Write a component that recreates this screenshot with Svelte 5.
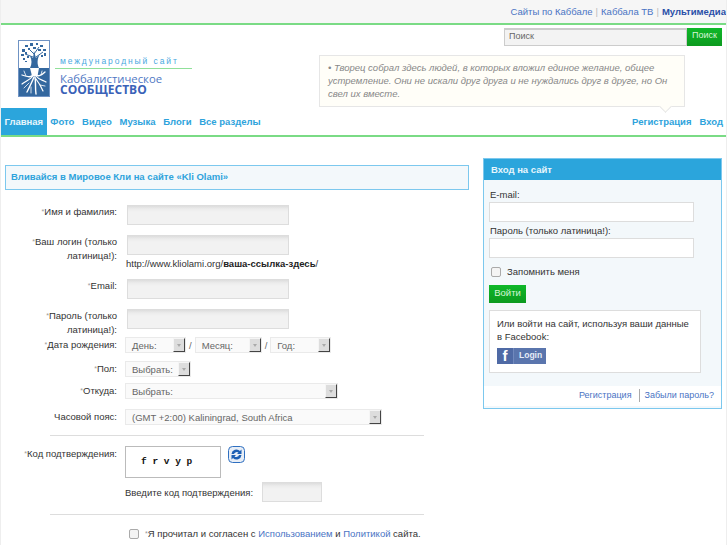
<script>
  const tz = '(GMT +2:00) Kaliningrad, South Africa'
</script>

{#snippet select(label, width)}
  <span class="select" style="width: {width}px">
    <span class="select-label">{label}</span>
    <span class="select-btn"><i></i></span>
  </span>
{/snippet}

<div class="page">
  <div class="topbar">
    <a href="#a">Сайты по Каббале</a><span class="sep">|</span><a href="#a">Каббала ТВ</a><span class="sep">|</span><a href="#a" class="strong">Мультимедиа</a>
  </div>

  <header class="header">
    <div class="head-main">
      <div class="logo">
        <svg class="tree" width="32" height="57" viewBox="0 0 32 57">
          <rect x="0.5" y="0.5" width="31" height="56" fill="#fff" stroke="#6f93c4"/>
          <rect x="1" y="28" width="30" height="28" fill="#34689f"/>
          <path d="M12 28 C14 24 14 20 12 16 L15 18 L16 11 L18 18 L22 14 C19 19 19 24 21 28Z" fill="#34689f"/>
          <g stroke="#34689f" stroke-width="1" fill="none">
            <path d="M16 14 L10 8 M16 14 L21 7 M15 17 L7 14 M18 17 L25 12"/>
          </g>
          <g fill="#34689f">
            <rect x="7" y="5" width="3" height="2"/><rect x="12" y="3" width="3" height="3"/><rect x="18" y="3" width="2" height="2"/><rect x="22" y="5" width="3" height="2"/>
            <rect x="4" y="9" width="3" height="3"/><rect x="10" y="8" width="2" height="2"/><rect x="15" y="7" width="3" height="2"/><rect x="20" y="9" width="3" height="2"/><rect x="25" y="9" width="3" height="2"/>
            <rect x="3" y="14" width="3" height="2"/><rect x="7" y="12" width="2" height="2"/><rect x="26" y="13" width="2" height="3"/><rect x="23" y="15" width="2" height="2"/>
            <rect x="5" y="18" width="2" height="2"/><rect x="9" y="16" width="2" height="2"/><rect x="7" y="21" width="2" height="1"/>
          </g>
          <path d="M12 28 L21 28 L19.5 36 L17 36 L14 36Z" fill="#fff"/>
          <g stroke="#fff" fill="none" stroke-linecap="round">
            <path d="M15 34 C14 38 10 37 4 35" stroke-width="1.3"/>
            <path d="M18 34 C19 37 23 36 27 32" stroke-width="1.3"/>
            <path d="M15 36 C12 40 8 41 4 44" stroke-width="1.2"/>
            <path d="M18 36 C21 40 25 40 28 42" stroke-width="1.2"/>
            <path d="M16 37 C14 42 12 46 9 52" stroke-width="1.4"/>
            <path d="M17 37 C18 42 17 47 18 54" stroke-width="1.4"/>
            <path d="M18 39 C21 43 23 46 25 51" stroke-width="1.2"/>
            <path d="M11 43 L6 48 M22 45 L27 46 M13 47 L13 53 M8 36 L6 31 M23 35 L24 31" stroke-width="0.8"/>
          </g>
        </svg>
        <div class="logo-text">
          <div class="intl">международный сайт</div>
          <div class="kab">Каббалистическое</div>
          <div class="com">СООБЩЕСТВО</div>
        </div>
      </div>

      <div class="head-right">
        <div class="search">
          <span class="search-input">Поиск</span>
          <span class="search-btn">Поиск</span>
        </div>
        <div class="quote">• Творец собрал здесь людей, в которых вложил единое желание, общее устремление. Они не искали друг друга и не нуждались друг в друге, но Он свел их вместе.</div>
      </div>
    </div>

    <nav class="nav">
      <div class="nav-left">
        <a href="#a" class="active">Главная</a>
        <a href="#a">Фото</a>
        <a href="#a">Видео</a>
        <a href="#a">Музыка</a>
        <a href="#a">Блоги</a>
        <a href="#a">Все разделы</a>
      </div>
      <div class="nav-right">
        <a href="#a">Регистрация</a>
        <a href="#a">Вход</a>
      </div>
    </nav>
  </header>

  <main class="content">
    <section class="reg">
      <h1 class="reg-title">Вливайся в Мировое Кли на сайте «Kli Olami»</h1>

      <div class="form">
        <div class="row r-name">
          <label class="lbl"><sup>*</sup>Имя и фамилия:</label>
          <div class="field"><span class="input"></span></div>
        </div>
        <div class="row r-login">
          <label class="lbl"><sup>*</sup>Ваш логин (только латиница!):</label>
          <div class="field">
            <span class="input"></span>
            <div class="url">http://www.kliolami.org/<b>ваша-ссылка-здесь</b>/</div>
          </div>
        </div>
        <div class="row r-email">
          <label class="lbl"><sup>*</sup>Email:</label>
          <div class="field"><span class="input"></span></div>
        </div>
        <div class="row r-pass">
          <label class="lbl"><sup>*</sup>Пароль (только латиница!):</label>
          <div class="field"><span class="input"></span></div>
        </div>
        <div class="row r-date">
          <label class="lbl"><sup>*</sup>Дата рождения:</label>
          <div class="field selects">
            {@render select('День:', 61)}<span class="slash">/</span>{@render select('Месяц:', 67)}<span class="slash">/</span>{@render select('Год:', 61)}
          </div>
        </div>
        <div class="row r-pol">
          <label class="lbl"><sup>*</sup>Пол:</label>
          <div class="field selects">{@render select('Выбрать:', 66)}</div>
        </div>
        <div class="row r-from">
          <label class="lbl"><sup>*</sup>Откуда:</label>
          <div class="field selects">{@render select('Выбрать:', 213)}</div>
        </div>
        <div class="row r-tz">
          <label class="lbl">Часовой пояс:</label>
          <div class="field selects">{@render select(tz, 257)}</div>
        </div>

        <hr />

        <div class="row r-code">
          <label class="lbl"><sup>*</sup>Код подтверждения:</label>
          <div class="field">
            <div class="captcha-line">
              <div class="captcha">f r v y p</div>
              <svg class="refresh" width="17" height="17" viewBox="0 0 17 17">
                <rect x="0.5" y="0.5" width="16" height="16" rx="4" fill="#e8eef6" stroke="#2f6fc0"/>
                <path d="M3.5 8 A5 5 0 0 1 12 5 L13.5 3.5 L13.5 8 L9 8 L10.5 6.5 A3 3 0 0 0 6 8Z" fill="#1c5fb4"/>
                <path d="M13.5 9 A5 5 0 0 1 5 12 L3.5 13.5 L3.5 9 L8 9 L6.5 10.5 A3 3 0 0 0 11 9Z" fill="#1c5fb4"/>
              </svg>
            </div>
            <div class="code-enter">
              <span class="code-label">Введите код подтверждения:</span>
              <span class="input code-input"></span>
            </div>
          </div>
        </div>

        <hr class="hr2" />

        <div class="agree">
          <span class="check"></span>
          <span><sup>*</sup>Я прочитал и согласен с <a href="#a">Использованием</a> и <a href="#a">Политикой</a> сайта.</span>
        </div>
      </div>
    </section>

    <aside class="login">
      <div class="login-head">Вход на сайт</div>
      <div class="login-body">
        <div class="l-label">E-mail:</div>
        <span class="l-input"></span>
        <div class="l-label l2">Пароль (только латиница!):</div>
        <span class="l-input"></span>
        <div class="remember"><span class="check"></span>Запомнить меня</div>
        <span class="login-btn">Войти</span>
        <div class="fb-box">
          <div>Или войти на сайт, используя ваши данные в Facebook:</div>
          <span class="fb-btn"><span class="fb-f">f</span><span class="fb-txt">Login</span></span>
        </div>
      </div>
      <div class="login-foot">
        <a href="#a">Регистрация</a><a href="#a" class="forgot">Забыли пароль?</a>
      </div>
    </aside>
  </main>
</div>

<style>
  :global(body) {
    margin: 0;
    background: #fff;
  }

  .page {
    box-sizing: border-box;
    width: 727px;
    height: 545px;
    overflow: hidden;
    border-left: 1px solid #eee;
    border-right: 1px solid #eee;
    font-family: "Liberation Sans", Arial, sans-serif;
    font-size: 9.5px;
    color: #333;
  }

  a {
    text-decoration: none;
  }

  .topbar {
    height: 23px;
    box-sizing: border-box;
    padding-top: 6px;
    background: #f6f6f6;
    text-align: right;
    white-space: nowrap;
    line-height: 12px;
  }

  .topbar a {
    color: #4a74c4;
  }

  .topbar .strong {
    color: #2a4fa8;
    font-weight: bold;
  }

  .sep {
    color: #bbb;
    margin: 0 3px;
  }

  .header {
    border-top: 2px solid #7adb85;
    border-bottom: 2px solid #7adb85;
    height: 110px;
    display: flex;
    flex-direction: column;
  }

  .head-main {
    display: flex;
    justify-content: space-between;
    height: 83px;
  }

  .logo {
    display: flex;
    align-items: flex-start;
    padding: 15px 0 0 17px;
  }

  .tree {
    display: block;
  }

  .logo-text {
    margin-left: 5px;
    width: 137px;
  }

  .intl {
    margin-top: 17px;
    height: 11px;
    padding-left: 5px;
    border-bottom: 1px solid #90e09a;
    color: #4aa9df;
    font-size: 8.5px;
    line-height: 9px;
    letter-spacing: 1.9px;
    white-space: nowrap;
  }

  .kab {
    padding-left: 5px;
    margin-top: 4px;
    color: #4f78c4;
    font-family: "Open Sans", sans-serif;
    font-size: 11.3px;
    line-height: 11px;
    white-space: nowrap;
  }

  .com {
    padding-left: 5px;
    color: #3a62b8;
    font-family: "Open Sans", sans-serif;
    font-size: 12px;
    font-weight: bold;
    line-height: 11px;
  }

  .head-right {
    display: flex;
    flex-direction: column;
    align-items: flex-end;
  }

  .search {
    display: flex;
    margin: 3px 4px 0 0;
    height: 18px;
  }

  .search-input {
    width: 183px;
    box-sizing: border-box;
    border: 1px solid #ccc;
    border-top: 2px solid #ccc;
    background: #f3f3f3;
    color: #666;
    font-size: 9px;
    line-height: 12px;
    padding-left: 4px;
  }

  .search-btn {
    width: 35px;
    background: linear-gradient(#0fb829, #0c9a1f);
    color: #d8f5d8;
    font-size: 9px;
    line-height: 15px;
    text-align: center;
  }

  .quote {
    position: relative;
    box-sizing: border-box;
    width: 366px;
    height: 52px;
    margin: 9px 41px 0 0;
    padding: 5px 8px;
    background: #fffef8;
    border: 1px solid #e6e6e6;
    color: #888;
    font-style: italic;
    line-height: 13px;
  }

  .quote::after {
    content: '';
    position: absolute;
    left: 341px;
    bottom: -5px;
    width: 8px;
    height: 8px;
    background: #fffef8;
    border-right: 1px solid #e6e6e6;
    border-bottom: 1px solid #e6e6e6;
    transform: rotate(45deg);
  }

  .nav {
    display: flex;
    justify-content: space-between;
    height: 27px;
    font-weight: bold;
    line-height: 27px;
  }

  .nav a {
    color: #2ea3dc;
  }

  .nav-left {
    display: flex;
    gap: 7.7px;
  }

  .nav-left .active {
    background: #2ba5dc;
    color: #e8f6fc;
    padding: 0 3.5px;
    margin-right: -4px;
  }

  .nav-right {
    display: flex;
    gap: 8px;
    padding-right: 3px;
  }

  .content {
    display: flex;
    align-items: flex-start;
    padding: 21px 4px 0 4px;
    gap: 14px;
  }

  .reg {
    width: 464px;
    flex: none;
    padding-top: 7px;
  }

  .reg-title {
    margin: 0;
    box-sizing: border-box;
    height: 25px;
    padding-left: 5px;
    background: #f3f8fb;
    border: 1px solid #7cc8ee;
    color: #2ea3dc;
    font-size: 9.5px;
    line-height: 22px;
    font-weight: bold;
  }

  .row {
    display: flex;
  }

  .lbl {
    width: 112px;
    flex: none;
    text-align: right;
    line-height: 14px;
    color: #333;
  }

  sup {
    color: #999;
    font-size: 7px;
    line-height: 0;
    vertical-align: 1px;
  }

  .field {
    margin-left: 10px;
  }

  .input {
    display: block;
    box-sizing: border-box;
    width: 162px;
    height: 20px;
    background: linear-gradient(#ddd 0, #ececec 3px, #f2f2f2 6px);
    border: 1px solid #ddd;
  }

  .r-name {
    padding-top: 15px;
    height: 20px;
  }

  .r-login {
    padding-top: 10px;
    height: 44px;
  }

  .url {
    margin-left: -1px;
    line-height: 13px;
    margin-top: 2px;
    white-space: nowrap;
  }

  .url b {
    color: #222;
  }

  .r-email {
    height: 20px;
  }

  .r-pass {
    padding-top: 10px;
    height: 20px;
  }

  .r-date,
  .r-pol,
  .r-from,
  .r-tz {
    align-items: center;
    height: 16px;
  }

  .r-date {
    margin-top: 8px;
  }

  .r-pol {
    margin-top: 8px;
  }

  .r-from {
    margin-top: 6px;
  }

  .r-tz {
    margin-top: 10px;
  }

  .selects {
    display: flex;
    align-items: center;
    margin-left: 8px;
  }

  .select {
    display: flex;
    justify-content: space-between;
    align-items: center;
    box-sizing: border-box;
    height: 16px;
    padding-left: 6px;
    background: #fafafa;
    border: 1px solid #eaeaea;
    color: #666;
    white-space: nowrap;
  }

  .select-btn {
    display: flex;
    flex: none;
    align-items: center;
    justify-content: center;
    box-sizing: border-box;
    width: 12px;
    height: 14px;
    background: #ddd;
    border-right: 1px solid #444;
    border-bottom: 1px solid #444;
    border-top: 1px solid #f5f5f5;
    border-left: 1px solid #f5f5f5;
  }

  .select-btn i {
    border-top: 3px solid #aaa;
    border-left: 2px solid transparent;
    border-right: 2px solid transparent;
  }

  .slash {
    color: #666;
    margin: 0 3px;
  }

  hr {
    border: 0;
    border-top: 1px solid #ddd;
    margin: 10px 0 0 45px;
    width: 374px;
  }

  .r-code {
    padding-top: 10px;
  }

  .r-code .lbl {
    padding-top: 1px;
  }

  .r-code .field {
    margin-left: 8px;
  }

  .captcha-line {
    display: flex;
    gap: 7px;
    align-items: flex-start;
  }

  .captcha {
    box-sizing: border-box;
    width: 96px;
    height: 32px;
    padding-left: 15px;
    border: 1px solid #bbb;
    background: #fff;
    color: #111;
    font-family: "Liberation Mono", monospace;
    font-size: 9.5px;
    font-weight: bold;
    line-height: 30px;
    white-space: nowrap;
  }

  .code-enter {
    display: flex;
    align-items: center;
    margin-top: 4px;
    white-space: nowrap;
  }

  .code-label {
    width: 137px;
  }

  .code-input {
    width: 60px;
  }

  .hr2 {
    margin-top: 12px;
  }

  .agree {
    display: flex;
    align-items: center;
    margin: 13px 0 0 124px;
    white-space: nowrap;
  }

  .agree a {
    color: #4a74c4;
  }

  .check {
    box-sizing: border-box;
    flex: none;
    display: inline-block;
    width: 10px;
    height: 10px;
    background: #f4f4f4;
    border: 1px solid #aaa;
    border-radius: 2px;
    margin-right: 6px;
  }

  .login {
    width: 239px;
    flex: none;
    box-sizing: border-box;
    border: 1px solid #7cc8ee;
    background: #f3f8fb;
    padding-bottom: 2px;
  }

  .login-head {
    height: 21px;
    background: #2ba5dc;
    color: #e8f6fc;
    font-weight: bold;
    line-height: 21px;
    padding-left: 7px;
  }

  .login-body {
    padding: 8px 5px 13px 5px;
  }

  .l-label {
    line-height: 13px;
    padding-left: 1px;
  }

  .l2 {
    margin-top: 2px;
  }

  .l-input {
    display: block;
    box-sizing: border-box;
    width: 205px;
    height: 20px;
    margin-top: 1px;
    background: #fff;
    border: 1px solid #ddd;
  }

  .remember {
    display: flex;
    align-items: center;
    margin: 7px 0 0 2px;
    line-height: 13px;
  }

  .login-btn {
    display: block;
    width: 37px;
    height: 18px;
    margin-top: 7px;
    background: linear-gradient(#0fb829, #0c9a1f);
    color: #d8f5d8;
    line-height: 15px;
    text-align: center;
  }

  .fb-box {
    box-sizing: border-box;
    width: 212px;
    height: 63px;
    margin-top: 7px;
    padding: 6px 7px;
    background: #fff;
    border: 1px solid #ddd;
    line-height: 13px;
  }

  .fb-btn {
    display: flex;
    width: 49px;
    height: 16px;
    margin-top: 5px;
    background: #5a75ad;
  }

  .fb-f {
    width: 16px;
    background: #4f6aa5;
    border-right: 1px solid #7189bd;
    color: #fff;
    font-size: 15px;
    font-weight: bold;
    line-height: 16px;
    text-align: center;
  }

  .fb-txt {
    color: #e6ecf6;
    font-size: 8.5px;
    font-weight: bold;
    line-height: 14px;
    padding-left: 5px;
  }

  .login-foot {
    display: flex;
    justify-content: flex-end;
    height: 20px;
    background: #fff;
    font-size: 9px;
    line-height: 19px;
    padding-right: 7px;
  }

  .login-foot a {
    color: #4a74c4;
  }

  .forgot {
    margin-left: 7px;
    padding-left: 5px;
    border-left: 1px solid #aaa;
    height: 13px;
    line-height: 13px;
    margin-top: 3px;
  }
</style>
